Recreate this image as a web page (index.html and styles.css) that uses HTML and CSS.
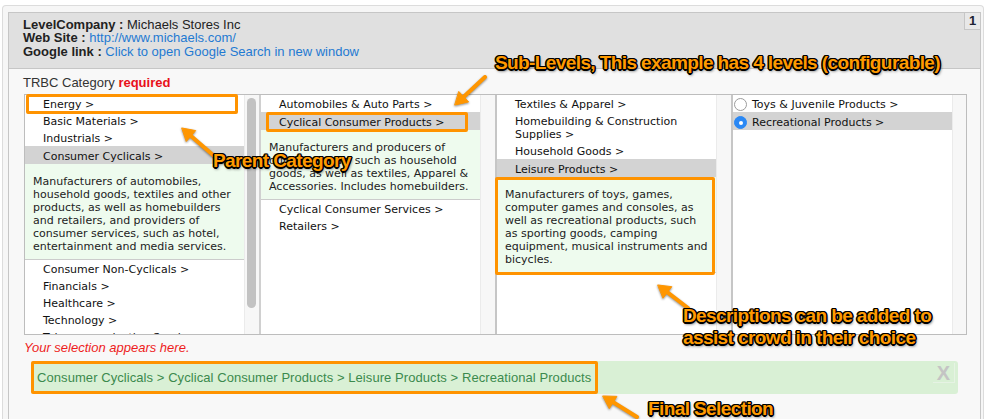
FILE: index.html
```html
<!DOCTYPE html>
<html>
<head>
<meta charset="utf-8">
<link rel="stylesheet" href="styles.css">
</head>
<body>
<div class="page">
  <div class="frame">
    <div class="panel">
      <div class="head">
        <div class="info">
          <div><b>LevelCompany :</b> Michaels Stores Inc</div>
          <div><b>Web Site :</b> <a href="#">http://www.michaels.com/</a></div>
          <div><b>Google link :</b> <a href="#">Click to open Google Search in new window</a></div>
        </div>
        <div class="page-num">1</div>
      </div>
      <div class="body">
        <div class="label">TRBC Category <span class="req">required</span></div>
        <div class="columns">
          <div class="col">
            <div class="list">
              <div class="item">Energy &gt;</div>
              <div class="item">Basic Materials &gt;</div>
              <div class="item">Industrials &gt;</div>
              <div class="item sel">Consumer Cyclicals &gt;</div>
              <div class="desc">Manufacturers of automobiles, household goods, textiles and other products, as well as homebuilders and retailers, and providers of consumer services, such as hotel, entertainment and media services.</div>
              <div class="item">Consumer Non-Cyclicals &gt;</div>
              <div class="item">Financials &gt;</div>
              <div class="item">Healthcare &gt;</div>
              <div class="item">Technology &gt;</div>
              <div class="item">Telecommunication Services &gt;</div>
            </div>
            <div class="track"><div class="thumb"></div></div>
          </div>
          <div class="col">
            <div class="list">
              <div class="item">Automobiles &amp; Auto Parts &gt;</div>
              <div class="item sel">Cyclical Consumer Products &gt;</div>
              <div class="desc">Manufacturers and producers of durable goods, such as household goods, as well as textiles, Apparel &amp; Accessories. Includes homebuilders.</div>
              <div class="item">Cyclical Consumer Services &gt;</div>
              <div class="item">Retailers &gt;</div>
            </div>
            <div class="track"></div>
          </div>
          <div class="col">
            <div class="list">
              <div class="item">Textiles &amp; Apparel &gt;</div>
              <div class="item">Homebuilding &amp; Construction Supplies &gt;</div>
              <div class="item">Household Goods &gt;</div>
              <div class="item sel">Leisure Products &gt;</div>
              <div class="desc">Manufacturers of toys, games, computer games and consoles, as well as recreational products, such as sporting goods, camping equipment, musical instruments and bicycles.</div>
            </div>
            <div class="track"></div>
          </div>
          <div class="col">
            <div class="list">
              <div class="item opt"><span class="radio"></span>Toys &amp; Juvenile Products &gt;</div>
              <div class="item opt sel"><span class="radio on"></span>Recreational Products &gt;</div>
            </div>
            <div class="track"></div>
          </div>
        </div>
        <div class="hint">Your selection appears here.</div>
        <div class="result">
          <span class="path">Consumer Cyclicals &gt; Cyclical Consumer Products &gt; Leisure Products &gt; Recreational Products</span>
          <span class="clear">X</span>
        </div>
      </div>
    </div>
  </div>

  <div class="hl hl-energy"></div>
  <div class="hl hl-cyc"></div>
  <div class="hl hl-desc"></div>
  <div class="hl hl-final"></div>

  <svg class="arrows" width="986" height="419" viewBox="0 0 986 419">
    <g fill="#ff9600" stroke="#ff9600" stroke-linecap="round">
      <line x1="485" y1="77" x2="463.8" y2="96.8" stroke-width="4"/>
      <polygon points="455,105 468.6,101.9 459,91.7" stroke-width="1"/>
      <line x1="213" y1="155" x2="191" y2="135.9" stroke-width="4"/>
      <polygon points="182,128 195.7,130.6 186.5,141.2" stroke-width="1"/>
      <line x1="688" y1="308" x2="667.5" y2="292.3" stroke-width="4"/>
      <polygon points="658,285 671.8,286.7 663.2,297.9" stroke-width="1"/>
      <line x1="637" y1="417" x2="613.2" y2="402.3" stroke-width="4"/>
      <polygon points="603,396 616.9,396.4 609.5,408.3" stroke-width="1"/>
    </g>
  </svg>

  <div class="note note-sub">Sub-Levels, This example has 4 levels (configurable)</div>
  <div class="note note-parent">Parent Category</div>
  <div class="note note-desc">Descriptions can be added to<br>assist crowd in their choice</div>
  <div class="note note-final">Final Selection</div>
</div>
</body>
</html>
```
FILE: styles.css
```css
* { box-sizing: border-box; }

body {
  margin: 0;
  background: #ffffff;
  font-family: "Liberation Sans", Arial, sans-serif;
  color: #222;
}

.page {
  position: relative;
  width: 986px;
  height: 419px;
  overflow: hidden;
}

.frame {
  margin: 5px 0 0 2px;
  width: 982px;
  height: 414px;
  border: 1px solid #dcdcdc;
  border-bottom: none;
  border-radius: 4px 4px 0 0;
  background: #f6f6f6;
  padding: 6px 2px 0 5px;
}

.panel {
  height: 100%;
  border: 1px solid #c6c6c6;
  border-bottom: none;
  background: #f8f8f8;
}

.head {
  display: flex;
  justify-content: space-between;
  height: 56px;
  padding: 5px 0 0 14px;
  background: #e0e0e0;
  border-bottom: 1px solid #c6c6c6;
}

.info {
  font-size: 13px;
  line-height: 13.4px;
  color: #222;
}

.info a {
  color: #1f7ad2;
  text-decoration: none;
}

.page-num {
  align-self: flex-start;
  margin-top: -5px;
  width: 16px;
  height: 17px;
  border-left: 1px solid #c6c6c6;
  border-bottom: 1px solid #c6c6c6;
  background: #e8e8e8;
  font-size: 13px;
  font-weight: bold;
  line-height: 16px;
  text-align: center;
  color: #1c2233;
}

.body {
  padding: 6px 0 0 15px;
}

.label {
  margin-left: -1px;
  font-size: 13px;
  line-height: 16px;
  color: #333;
}

.req {
  color: #e8101a;
  font-weight: bold;
}

.columns {
  display: flex;
  margin-top: 3px;
  width: 943px;
  height: 241px;
  border: 1px solid #bdbdbd;
  background: #fff;
  overflow: hidden;
}

.col {
  display: flex;
  border-right: 2px solid #c6c6c6;
}

.col:first-child {
  border-right-color: #d0d0d0;
}

.col:last-child {
  border-right: none;
}

.list {
  width: 219px;
  overflow: hidden;
  background: #fff;
  font-family: "DejaVu Sans", Verdana, sans-serif;
  font-size: 11px;
  line-height: 13px;
  color: #111;
}

.track {
  width: 15px;
  background: #f7f7f7;
  border-left: 1px solid #ebebeb;
  padding: 3px 0 0 2px;
}

.thumb {
  width: 9px;
  height: 210px;
  border-radius: 5px;
  background: #c2c2c2;
}

.item {
  padding: 3px 4px 1px 18px;
}

.item.sel {
  padding-top: 4px;
  padding-bottom: 1px;
  background: #d3d3d3;
}

.desc {
  padding: 11px 8px 6px 8px;
  background: #eefbee;
  border-bottom: 1px solid #cccccc;
  color: #222;
}

.item.opt {
  display: flex;
  align-items: center;
  gap: 5px;
  padding-left: 1px;
}

.radio {
  flex: none;
  width: 13px;
  height: 13px;
  border-radius: 50%;
  border: 1px solid #9c9c9c;
  background: #fff;
  display: flex;
  align-items: center;
  justify-content: center;
}

.radio.on {
  border-color: #2a88f4;
  background: #2a88f4;
}

.radio.on::after {
  content: "";
  width: 4px;
  height: 4px;
  border-radius: 50%;
  background: #fff;
}

.hint {
  margin-top: 5px;
  font-size: 13px;
  line-height: 15px;
  font-style: italic;
  color: #ee1c1c;
}

.result {
  display: flex;
  justify-content: space-between;
  align-items: center;
  margin: 6px 0 0 7px;
  width: 927px;
  height: 33px;
  padding: 0 3px 0 6px;
  background: #d9f0d5;
  border-radius: 3px;
  color: #3b8a4d;
  font-size: 13px;
  letter-spacing: 0.07px;
}

.clear {
  align-self: flex-start;
  margin-top: 2px;
  width: 22px;
  height: 20px;
  border-right: 1px solid #e6f3e4;
  border-bottom: 1px solid #e6f3e4;
  color: #c4c4c4;
  font-size: 20px;
  font-weight: bold;
  line-height: 20px;
  text-align: center;
}

/* annotation overlays */
.hl {
  position: absolute;
  border: 3px solid #ff9300;
  border-radius: 2px;
}

.hl-energy { left: 26px; top: 94px; width: 212px; height: 20px; }
.hl-cyc { left: 266px; top: 112px; width: 202px; height: 20px; }
.hl-desc { left: 495px; top: 177px; width: 220px; height: 98px; }
.hl-final { left: 31px; top: 361px; width: 567px; height: 33px; }

.arrows {
  position: absolute;
  left: 0;
  top: 0;
  filter: drop-shadow(0 1px 1px rgba(0, 0, 0, 0.45));
}

.note {
  position: absolute;
  font-family: "Liberation Sans", Arial, sans-serif;
  font-weight: bold;
  font-size: 19px;
  line-height: 22px;
  letter-spacing: -0.6px;
  color: #ff9a00;
  white-space: nowrap;
  text-shadow:
    -1px -1px 0 #000, 1px -1px 0 #000, -1px 1px 0 #000, 1px 1px 0 #000,
    0 -1.5px 0 #000, 0 1.5px 0 #000, -1.5px 0 0 #000, 1.5px 0 0 #000,
    1px 2px 3px rgba(0, 0, 0, 0.75);
}

.note-sub { left: 495px; top: 52px; }
.note-parent { left: 213px; top: 150px; }
.note-desc { left: 683px; top: 305px; }
.note-final { left: 648px; top: 398px; }
```
